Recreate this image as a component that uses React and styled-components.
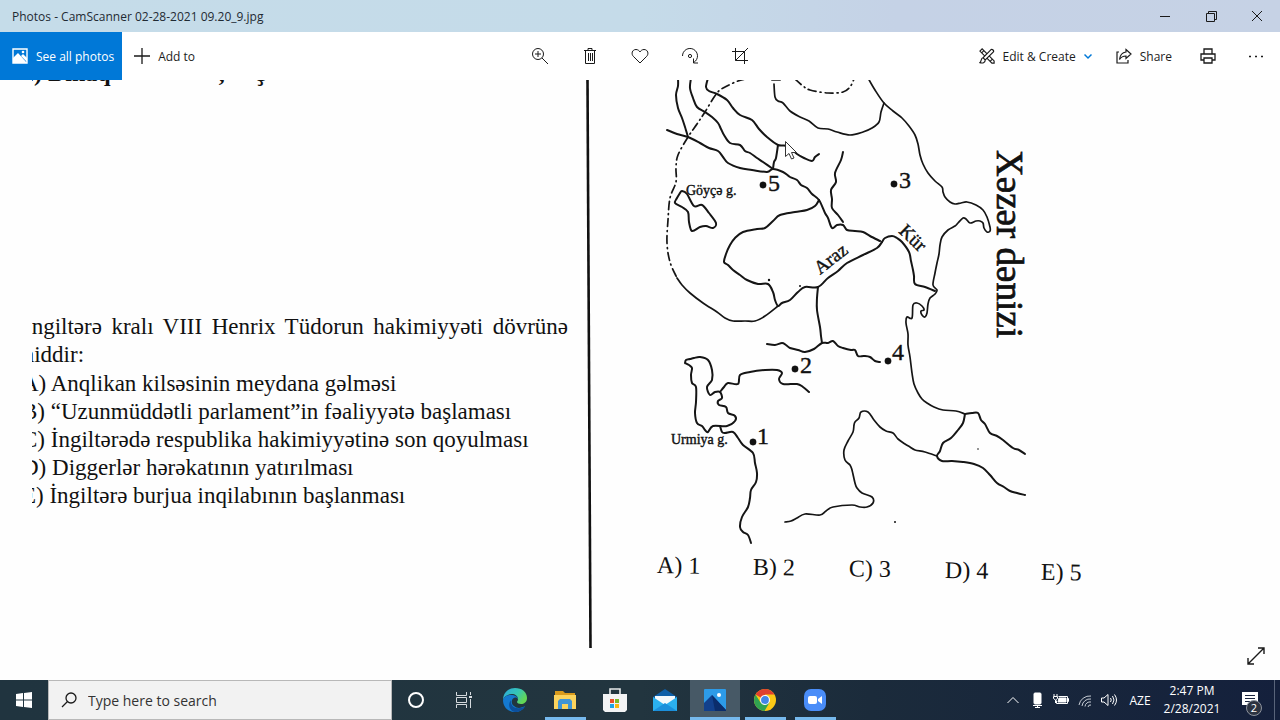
import React from 'react';
import styled, { createGlobalStyle, css } from 'styled-components';

const GlobalStyle = createGlobalStyle`
  * {
    box-sizing: border-box;
  }
  body {
    margin: 0;
    font-family: "Open Sans", "Noto Sans", sans-serif;
    font-size: 12px;
    color: #1c1c1c;
    background-color: #fefefe;
  }
  button {
    font: inherit;
    color: inherit;
    background: none;
    border: none;
    padding: 0;
    margin: 0;
  }
  svg {
    display: block;
    flex: none;
  }
`;

const Window = styled.div`
  display: flex;
  flex-direction: column;
  min-height: 100vh;
`;

const TitleBar = styled.header`
  display: flex;
  align-items: center;
  justify-content: space-between;
  height: 32px;
  padding-left: 12px;
  background: linear-gradient(90deg, #c5dce9 0%, #c5dbe9 50%, #c5d2e6 70%, #c6d2e5 100%);
`;

const Title = styled.h1`
  margin: 0;
  font-size: 12px;
  font-weight: 400;
  color: #1f2a33;
`;

const WindowButtons = styled.div`
  display: flex;
`;

const WindowButton = styled.button`
  display: flex;
  align-items: center;
  justify-content: center;
  width: 46px;
  height: 32px;
`;

const Toolbar = styled.nav`
  display: grid;
  grid-template-columns: 1fr auto 1fr;
  height: 48px;
  background-color: #fff;
`;

const ToolButton = styled.button`
  display: flex;
  align-items: center;
  justify-content: center;
  gap: 8px;
  min-width: ${props => (props.$wide ? '0' : '50px')};
  padding: ${props => (props.$wide ? '0 12px' : '0')};
  ${props => props.$primary && css`
    padding-right: 8px;
    color: #fff;
    background-color: #0078d7;
  `}
`;

const Group = styled.div`
  display: flex;
  justify-content: ${props => (props.$end ? 'flex-end' : 'flex-start')};
  ${props => props.$end && css`
    ${ToolButton}:nth-child(n + 3) {
      min-width: 48px;
    }
  `}
`;

const Viewer = styled.main`
  position: relative;
  flex: 1;
  padding: 0 0 32px 32px;
`;

const Photo = styled.article`
  display: grid;
  grid-template-columns: 554fr 6px 688fr;
  height: 100%;
  min-height: 568px;
  overflow: hidden;
  font-family: "Liberation Serif", serif;
  color: #111;
`;

const LeftColumn = styled.section`
  padding-right: 18px;
`;

const PreviousLine = styled.p`
  height: 7px;
  margin: 0 0 226px -14px;
  font-size: 24px;
  font-weight: 700;
  line-height: 28px;
  display: flex;
  align-items: flex-end;
  white-space: pre;
  overflow: hidden;
`;

const Question = styled.p`
  margin: 0 0 0 -8px;
  font-size: 23px;
  line-height: 28px;
  text-align: justify;
`;

const Options = styled.ul`
  margin: 1px 0 0 -10px;
  padding: 0;
  list-style: none;
  font-size: 23px;
  line-height: 28px;
  white-space: nowrap;
`;

const RightColumn = styled.section`
  padding-left: 58px;
`;

const Answers = styled.ul`
  display: grid;
  grid-template-columns: repeat(5, 96px);
  margin: 6px 0 0 7px;
  padding: 0;
  list-style: none;
  font-size: 24px;
  line-height: 28px;
  transform: rotate(1deg);
  transform-origin: left center;
`;

const ExpandButton = styled.button`
  position: absolute;
  right: 14px;
  bottom: 14px;
`;

const Taskbar = styled.footer`
  display: flex;
  height: 40px;
  color: #fff;
  background: linear-gradient(90deg, #20343f 0%, #22353f 50%, #1b2b3b 68%, #14203c 100%);
`;

const TaskButton = styled.button`
  position: relative;
  display: flex;
  align-items: center;
  justify-content: center;
  width: ${props => (props.$narrow ? '48px' : '50px')};
  ${props => props.$active && css`
    background-color: #475966;
  `}
  ${props => props.$open && css`
    &::after {
      content: "";
      position: absolute;
      left: ${props.$active ? '0' : '5px'};
      right: ${props.$active ? '0' : '4px'};
      bottom: 0;
      height: 3px;
      background-color: #76b9ed;
    }
  `}
`;

const Apps = styled.div`
  display: flex;
  margin-left: 2px;
`;

const Search = styled.label`
  display: flex;
  align-items: center;
  gap: 11px;
  width: 344px;
  padding-left: 12px;
  background-color: #f2f2f2;
  border: 1px solid #b8b8b8;
`;

const SearchInput = styled.input`
  flex: 1;
  min-width: 0;
  padding: 0;
  border: none;
  outline: none;
  background: none;
  font: 14px "Open Sans", "Noto Sans", sans-serif;
  &::placeholder {
    color: #333;
    opacity: 1;
  }
`;

const Tray = styled.div`
  display: flex;
  align-items: stretch;
  margin-left: auto;
`;

const TrayButton = styled.button`
  display: flex;
  align-items: center;
  justify-content: center;
  width: 24px;
`;

const Language = styled.button`
  width: 38px;
  font-size: 12px;
`;

const Clock = styled.time`
  width: 66px;
  padding-top: 2px;
  font-size: 12px;
  line-height: 18px;
  text-align: center;
`;

const Notifications = styled.button`
  position: relative;
  display: flex;
  align-items: center;
  justify-content: center;
  width: 50px;
  margin-right: 5px;
  border-right: 1px solid #59647a;
`;

const Badge = styled.span`
  position: absolute;
  right: 12px;
  bottom: 4px;
  width: 16px;
  height: 16px;
  border: 1px solid #8d939e;
  border-radius: 50%;
  background-color: #2c3341;
  font-size: 11px;
  line-height: 14px;
`;

const Icon = ({ size = 18, color = '#1a1a1a', width = 1, children }) => (
  <svg
    width={size}
    height={size}
    viewBox={`0 0 ${size} ${size}`}
    fill="none"
    stroke={color}
    strokeWidth={width}
    aria-hidden="true"
  >
    {children}
  </svg>
);

// Rounds a list of "x,y" points into a curve that passes through all of them
const curve = (text) => {
  const p = text.split(' ').map(pair => pair.split(',').map(Number));
  let d = `M${p[0]}`;
  for (let i = 0; i < p.length - 1; i += 1) {
    const a = p[i - 1] || p[i];
    const b = p[i];
    const c = p[i + 1];
    const e = p[i + 2] || c;
    d += `C${b[0] + (c[0] - a[0]) / 6},${b[1] + (c[1] - a[1]) / 6} `;
    d += `${c[0] - (e[0] - b[0]) / 6},${c[1] - (e[1] - b[1]) / 6} ${c}`;
  }
  return d;
};

const thinLines = [
  '868,78 875,90 884,103 893,111 902,118 909,126 915,135 918,144 920,155 923,164 928,173 935,181 942,187 943,192 945,197 950,202 955,204 961,203 967,202 976,205 983,210 987,217 990,227 990,231 987,232 984,228 983,223 980,221 976,221 970,223 966,219 963,218 958,223 955,226 948,230 942,237 940,245 939,254 937,263 935,273 933,285 937,290 935,294 930,298 928,304 927,313 925,317 922,315 921,311 924,310 922,306 917,303 913,305 912,318 907,317 906,323 908,334 908,345 910,357 912,373 914,384 918,393 922,399 927,403 934,407 943,410 956,411 965,414',
  '774,84 775,97 778,101 783,103 790,111 800,117 809,121 818,128 828,129 837,132 850,135 863,132 872,128 879,122 881,112 884,103',
  '677,278 682,285 690,293 703,303 717,312 725,318 733,321 745,321 755,321 765,316 778,306',
  '785,522 791,521 797,518 805,514 820,515 826,511 833,507 852,505 860,507 867,507 873,503 872,497 862,493 857,488 855,483 852,470 850,465 845,460 844,450 848,441 853,432 854,425 855,422 859,418 861,412 868,412 874,420 880,427 886,431 893,433 898,439 905,444 910,447 915,450 925,452 937,456',
];

const thickLines = [
  '678,78 678,86 676,95 678,108 682,118 685,127 688,137',
  '691,78 690,88 693,98 697,107 705,112 712,117 718,123 721,129 724,135 730,143 740,145 745,151 750,153 757,158 763,162 773,169',
  '708,78 706,87 709,91 717,94 727,100 733,108 740,115 752,120 759,129 767,137 778,145 787,146 797,154 804,158 812,161 815,157 819,154',
  '778,145 776,158 774,162 773,169',
  '843,152 841,160 835,173 836,182 831,190 832,199 832,208 838,215 843,222',
  '667,130 677,134 688,137 700,143 709,148 718,151 723,157 728,163 740,168 752,170 767,172 773,169 783,172 790,177 797,180 801,185 807,188 812,194 819,200 825,213 828,218 832,228 837,225 843,225 847,230 855,231 863,232 870,236 880,241',
  '882,242 885,238 892,236 897,238 902,242 909,252 911,261 913,270 914,276 915,284 925,287 935,291',
  '819,200 815,206 807,210 795,212 780,215 773,221 765,228 757,229 743,232 735,238 730,245 726,254 724,262 728,265 733,270 740,275 747,280 758,284 768,284 773,292 775,300 778,306 782,303 790,300 798,292 805,287 818,287 828,278 838,271 847,263 863,255 877,248 882,242',
  '818,287 817,298 817,310 820,327 821,336 822,343',
  '767,344 775,345 782,343 786,345 790,348 798,350 805,352 814,349 822,343 828,343 833,341 838,346 843,348 851,350 855,350 858,356 864,356 870,357 875,361 880,362',
  '685,363 686,360 690,359 694,358 700,357 708,360 712,370 712,380 707,387 710,395 715,392 720,392 722,398 718,401 719,405 726,407 728,413 735,416 735,421 727,426 713,426 708,432 705,430 702,426 697,423 695,413 696,402 696,387 692,383 691,375 692,368 689,365 685,363',
  '720,392 724,387 728,383 738,384 740,375 750,372 765,370 777,370 782,373 779,379 783,384 797,384 803,387 809,392',
  '720,426 722,432 725,433 733,432 738,438 743,445 753,453 755,463 757,473 756,482 751,490 750,498 748,507 742,517 740,527 743,532 748,535 751,543',
  '680,193 682,191 687,194 694,206 702,205 709,213 716,223 713,228 706,226 700,227 692,231 689,222 688,212 682,207 675,203 677,198 680,193',
  '965,414 963,423 958,430 951,438 943,443 940,451 937,456 942,461 952,461 963,462 974,464 983,468 990,475 997,483 1004,487 1010,491 1017,493 1025,495',
  '965,414 972,413 978,413 981,420 985,424 990,433 997,436 1003,440 1013,448 1019,450 1025,454',
];

const dashedLines = [
  '745,79 738,81 727,86 717,93 705,112 697,124 688,137 678,155 676,168 676,182 670,198 668,220 667,243 670,262 677,278',
  '795,79 803,86 810,90 828,93 843,92 850,87 854,79',
  '772,80 780,80',
];

const places = [
  { name: '1', dot: [753, 442], label: [757, 444] },
  { name: '2', dot: [795, 369], label: [800, 373] },
  { name: '3', dot: [894, 184], label: [899, 188] },
  { name: '4', dot: [888, 361], label: [892, 360] },
  { name: '5', dot: [763, 185], label: [768, 191] },
];

const Map = () => (
  <svg width="390" height="465" viewBox="650 80 390 465" fontFamily="Liberation Serif, serif" fill="#111">
    <g fill="none" stroke="#151515" strokeLinecap="round" strokeLinejoin="round">
      <g strokeWidth="1.7">
        {thinLines.map(line => <path key={line} d={curve(line)} />)}
      </g>
      <g strokeWidth="2">
        {thickLines.map(line => <path key={line} d={curve(line)} />)}
      </g>
      <g strokeWidth="1.7" strokeDasharray="8 4 1 4">
        {dashedLines.map(line => <path key={line} d={curve(line)} />)}
      </g>
    </g>
    <g stroke="#111" strokeWidth="0.4">
      {places.map(({ name, dot, label }) => (
        <g key={name} fontSize="24">
          <circle cx={dot[0]} cy={dot[1]} r="3.2" />
          <text x={label[0]} y={label[1]}>{name}</text>
        </g>
      ))}
      <text x="686" y="195" fontSize="14">Göyçə g.</text>
      <text x="671" y="444" fontSize="14">Urmiya g.</text>
      <text transform="translate(820 275) rotate(-38)" fontSize="19">Araz</text>
      <text transform="translate(898 232) rotate(44)" fontSize="19">Kür</text>
      <text transform="translate(997 150) rotate(90)" fontSize="37" strokeWidth="0.7">Xəzər dənizi</text>
    </g>
    <circle cx="769" cy="280" r="1.2" />
    <circle cx="800" cy="286" r="1" />
    <circle cx="895" cy="522" r="1" />
    <circle cx="978" cy="449" r="0.8" />
    <path
      d="M785.5 141.5v15l3.5-3 2.5 5.5 2.5-1-2.5-5.5h5z"
      fill="#fff"
      stroke="#333"
    />
  </svg>
);

const Divider = () => (
  <svg width="6" height="100%" viewBox="0 0 6 568" preserveAspectRatio="none">
    <path d="M1.5 0L4.5 568" stroke="#111" strokeWidth="2.6" />
  </svg>
);

const PicturesIcon = () => (
  <svg width="16" height="16" viewBox="0 0 16 16">
    <path d="M1 1h14v14H1z" fill="none" stroke="#fff" strokeWidth="1.4" />
    <path d="M1 10l5-5 9 10H1z" fill="#fff" />
    <path d="M9 8l2-2 4 4v4z" fill="#fff" />
    <circle cx="11" cy="4" r="1.3" fill="#fff" />
  </svg>
);

const EdgeIcon = () => (
  <svg width="24" height="24" viewBox="0 0 24 24">
    <defs>
      <linearGradient id="edgeTop" x1="0" x2="1" y1="0" y2="0.5">
        <stop offset="0" stopColor="#2ba8e0" />
        <stop offset="0.6" stopColor="#36c6b4" />
        <stop offset="1" stopColor="#63d655" />
      </linearGradient>
    </defs>
    <path d="M0 12C0 5 5 0 12 0c7 0 12 4 12 10 0 4-3 6-6 6-2 0-4-1-4-2s1-1 1-3c0-3-3-5-6-5-4 0-8 2-9 6z" fill="url(#edgeTop)" />
    <path d="M0 12c1-4 5-5 8-5 4 0 7 2 7 4-1-1-2-2-4-1-3 1-3 6 0 8 3 3 8 2 11 0-2 4-6 6-10 6C5 24 0 19 0 12z" fill="#1479cf" />
    <path d="M8 12c-1 6 4 9 9 8 2 0 4-1 5-2-2 4-6 6-10 6-5-1-8-7-4-12z" fill="#0c4f9c" />
  </svg>
);

const FolderIcon = () => (
  <svg width="22" height="20" viewBox="0 0 22 20">
    <path d="M1 1h8l2 2h10v5H1z" fill="#d99a1c" />
    <path d="M0 5h22v14H0z" fill="#fbd35d" />
    <path d="M4 19v-8l2-2h10l2 2v8h-4v-5H8v5z" fill="#3f94d6" />
  </svg>
);

const StoreIcon = () => (
  <svg width="24" height="24" viewBox="0 0 24 24">
    <path d="M7 7V1h10v6" fill="none" stroke="#e8eaec" strokeWidth="1.6" />
    <path d="M0 6h24v16l-2 2H2l-2-2z" fill="#f2f3f4" />
    <path d="M7 11h4v4H7z" fill="#e8502c" />
    <path d="M12 11h4v4h-4z" fill="#7cb928" />
    <path d="M7 16h4v4H7z" fill="#1fa4e8" />
    <path d="M12 16h4v4h-4z" fill="#f9b814" />
  </svg>
);

const MailIcon = () => (
  <svg width="24" height="24" viewBox="0 0 24 24">
    <path d="M0 9l12-8 12 8v5H0z" fill="#0f5fa8" />
    <path d="M2 8h20v9H2z" fill="#f4f8fb" />
    <path d="M0 9l12 8 12-8v14H0z" fill="#2bb0ee" />
    <path d="M0 23l12-8 12 8z" fill="#1b8fdb" />
  </svg>
);

const PhotosIcon = () => (
  <svg width="22" height="22" viewBox="0 0 22 22">
    <rect width="22" height="22" rx="1" fill="#2d9be8" />
    <path d="M0 14l8-8 14 15v1H0z" fill="#12408c" />
    <path d="M11 22L8 6l14 15v1z" fill="#0b2d6b" />
    <circle cx="15" cy="6" r="2" fill="#fff" />
  </svg>
);

const ChromeIcon = () => (
  <svg width="22" height="22" viewBox="0 0 22 22">
    <circle cx="11" cy="11" r="11" fill="#fbc916" />
    <path d="M11 11L1.5 5.500A11 11 0 0 1 20.500 5.500H11z" fill="#e0402f" />
    <path d="M1.500 5.500A11 11 0 0 0 10.500 22L15.500 13.500 11 11 6.500 13.500z" fill="#30a350" />
    <circle cx="11" cy="11" r="5" fill="#fff" />
    <circle cx="11" cy="11" r="3.900" fill="#4285e8" />
  </svg>
);

const ZoomIcon = () => (
  <svg width="24" height="24" viewBox="0 0 24 24">
    <rect x="1" y="1" width="22" height="22" rx="7" fill="#4a8df8" />
    <rect x="5" y="8" width="9" height="8" rx="2" fill="#fff" />
    <path d="M15 11l4-3v8l-4-3z" fill="#fff" />
  </svg>
);

export default () => (
  <Window>
    <GlobalStyle />
    <TitleBar>
      <Title>Photos - CamScanner 02-28-2021 09.20_9.jpg</Title>
      <WindowButtons>
        <WindowButton aria-label="Minimize">
          <Icon size={10}><path d="M0 5.5h10" /></Icon>
        </WindowButton>
        <WindowButton aria-label="Restore">
          <Icon size={11}><path d="M.5 2.500h8v8h-8zM2.500 2.500v-2h8v8h-2" /></Icon>
        </WindowButton>
        <WindowButton aria-label="Close">
          <Icon size={10}><path d="M0 0l10 10M10 0L0 10" /></Icon>
        </WindowButton>
      </WindowButtons>
    </TitleBar>
    <Toolbar>
      <Group>
        <ToolButton $wide $primary><PicturesIcon />See all photos</ToolButton>
        <ToolButton $wide>
          <Icon size={16}><path d="M8 0v16M0 8h16" strokeWidth="1.3" /></Icon>
          Add to
        </ToolButton>
      </Group>
      <Group>
        <ToolButton aria-label="Zoom">
          <Icon><circle cx="7" cy="7" r="5.500" /><path d="M4 7h6M7 4v6M11 11l6 6" /></Icon>
        </ToolButton>
        <ToolButton aria-label="Delete">
          <Icon>
            <path d="M3 3.500h12M4.500 3.500v13h9v-13M7 3V1.500h4V3M7.500 6v8M9.500 6v8M11.500 6v8" />
          </Icon>
        </ToolButton>
        <ToolButton aria-label="Add to favorites">
          <Icon><path d="M9 16L2.300 9.300C0 7 1 2.500 5 2.500c2 0 3.300 1.300 4 2.500.7-1.200 2-2.500 4-2.500 4 0 5 4.500 2.700 6.800z" /></Icon>
        </ToolButton>
        <ToolButton aria-label="Rotate">
          <Icon>
            <path d="M1.500 9a7.500 7.500 0 1 1 11.500 6.300M12.500 11.500v4.500H17" />
            <circle cx="9" cy="9" r="1.600" />
          </Icon>
        </ToolButton>
        <ToolButton aria-label="Crop">
          <Icon><path d="M4.500 1v12.500H17M1 4.500h12.500V17M4.500 13.500L17 1" /></Icon>
        </ToolButton>
      </Group>
      <Group $end>
        <ToolButton $wide>
          <svg width="16" height="16" viewBox="0 0 18 18" fill="none" stroke="#1a1a1a" strokeWidth="1.3">
            <path d="M1 3.500L3.500 1 17 14.500V17h-2.500zM3 5.500L5.500 3M12.500 15l2.500-2.500" />
            <path d="M13.500 1.800c1.500-1 3.700 1.200 2.700 2.700L7 13.500 4.500 11zM4.500 11c-2.500.5-1.500 3.500-3.500 5.500 3 1 6 0 6-3" fill="#fff" />
          </svg>
          Edit &amp; Create
          <Icon size={8} color="#0078d7" width={1.5}><path d="M.5 2.500L4 6l3.500-3.500" /></Icon>
        </ToolButton>
        <ToolButton $wide>
          <Icon size={16} width={1.2}>
            <path d="M3 4H1v11h11v-3M10 1.500L15 6l-5 4.500V8c-3 0-5 1-6.500 3.500C4 7 6 4.500 10 4z" />
          </Icon>
          Share
        </ToolButton>
        <ToolButton aria-label="Print">
          <Icon size={16} width={1.3}>
            <path d="M4 6V1h8v5M4 12H1V6h14v6h-3M4 10h8v5H4z" />
          </Icon>
        </ToolButton>
        <ToolButton aria-label="See more">
          <Icon size={16}>
            <path d="M1 8.500h2M7 8.500h2M13 8.500h2" strokeWidth="1.500" />
          </Icon>
        </ToolButton>
      </Group>
    </Toolbar>
    <Viewer>
      <Photo>
        <LeftColumn>
          <PreviousLine>E) Dınaq                  ,     ҫ</PreviousLine>
          <Question>İngiltərə kralı VIII Henrix Tüdorun hakimiyyəti dövrünə aiddir:</Question>
          <Options>
            <li>A) Anqlikan kilsəsinin meydana gəlməsi</li>
            <li>B) “Uzunmüddətli parlament”in fəaliyyətə başlaması</li>
            <li>C) İngiltərədə respublika hakimiyyətinə son qoyulması</li>
            <li>D) Diggerlər hərəkatının yatırılması</li>
            <li>E) İngiltərə burjua inqilabının başlanması</li>
          </Options>
        </LeftColumn>
        <Divider />
        <RightColumn>
          <Map />
          <Answers>
            <li>A) 1</li>
            <li>B) 2</li>
            <li>C) 3</li>
            <li>D) 4</li>
            <li>E) 5</li>
          </Answers>
        </RightColumn>
      </Photo>
      <ExpandButton aria-label="Full screen">
        <Icon size={20} width={1.4}>
          <path d="M2 18L18 2M12 2h6v6M2 12v6h6" />
        </Icon>
      </ExpandButton>
    </Viewer>
    <Taskbar>
      <TaskButton $narrow aria-label="Start">
        <svg width="16" height="16" viewBox="0 0 16 16">
          <path d="M0 2l7-1v6.500H0zM8 1l8-1v7.500H8zM0 8.500h7V15l-7-1zM8 8.500h8V16l-8-1z" fill="#fff" />
        </svg>
      </TaskButton>
      <Search>
        <Icon size={16} width={1.3}><circle cx="10" cy="6" r="5" /><path d="M6.500 9.500L1 15" /></Icon>
        <SearchInput type="text" aria-label="Search" placeholder="Type here to search" />
      </Search>
      <TaskButton $narrow aria-label="Cortana">
        <Icon size={16} color="#fff" width={2}><circle cx="8" cy="8" r="7" /></Icon>
      </TaskButton>
      <TaskButton $narrow aria-label="Task view">
        <Icon size={16} color="#d5dade">
          <path d="M.5 0v3.500h10V0M.5 5.500h10v5H.5zM.5 16v-3.500h10V16M14.500 0v3M14.500 7v9" />
          <path d="M13 5h3" strokeWidth="2" />
        </Icon>
      </TaskButton>
      <Apps>
        <TaskButton aria-label="Edge"><EdgeIcon /></TaskButton>
        <TaskButton $open aria-label="File Explorer"><FolderIcon /></TaskButton>
        <TaskButton aria-label="Store"><StoreIcon /></TaskButton>
        <TaskButton aria-label="Mail"><MailIcon /></TaskButton>
        <TaskButton $open $active aria-label="Photos"><PhotosIcon /></TaskButton>
        <TaskButton $open aria-label="Chrome"><ChromeIcon /></TaskButton>
        <TaskButton $open aria-label="Zoom meetings"><ZoomIcon /></TaskButton>
      </Apps>
      <Tray>
        <TrayButton aria-label="Show hidden icons">
          <Icon size={12} color="#fff"><path d="M.5 9L6 3.500 11.500 9" /></Icon>
        </TrayButton>
        <TrayButton aria-label="Microphone">
          <Icon size={16} color="#fff">
            <rect x="5" y="1" width="7" height="11" rx="1" fill="#fff" />
            <path d="M4 13.500h9M8.500 13v3M6 15.500h5" />
          </Icon>
        </TrayButton>
        <TrayButton aria-label="Battery">
          <Icon size={16} color="#fff">
            <path d="M5.500 4.500h9v7h-11v-3M14.500 6.500h1v3h-1M1 2v2M4 2v2M.5 4.500h4v2l-2 1.500-2-1.500zM2.500 8v3" />
            <path d="M6 6h7v4H5z" fill="#fff" />
          </Icon>
        </TrayButton>
        <TrayButton aria-label="Wi-Fi">
          <Icon size={16} color="#c8ced6">
            <path d="M2 13A11 11 0 0 1 14 4M5 14a8 8 0 0 1 9-7M8 14.500a5 5 0 0 1 6-4.500M11 15a2.500 2.500 0 0 1 3-2" />
          </Icon>
        </TrayButton>
        <TrayButton aria-label="Volume">
          <Icon size={16} color="#fff">
            <path d="M.5 6v4H3l4 3.500v-11L3 6zM9.500 6q1.500 2 0 4M11.500 4q3 4 0 8M13.500 2.500q4 5.500 0 11" />
          </Icon>
        </TrayButton>
        <Language>AZE</Language>
        <Clock>2:47 PM<br />2/28/2021</Clock>
        <Notifications aria-label="2 notifications">
          <Icon size={16} color="#1a2540">
            <path d="M0 0h16v13H9l-4 3v-3H0z" fill="#fff" stroke="none" />
            <path d="M3 3.500h10M3 6.500h10M3 9.500h6" />
          </Icon>
          <Badge>2</Badge>
        </Notifications>
      </Tray>
    </Taskbar>
  </Window>
);
